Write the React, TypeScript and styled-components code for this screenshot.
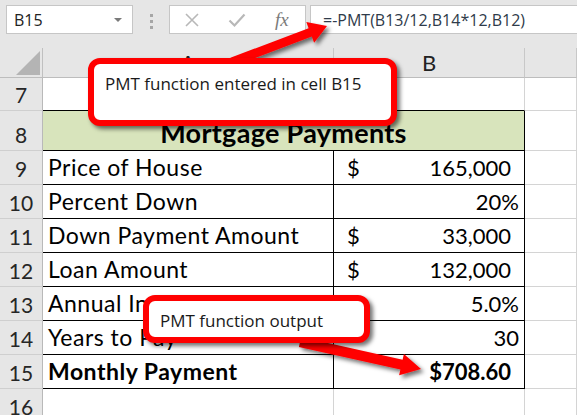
import React from 'react';
import styled, { createGlobalStyle } from 'styled-components';

const GlobalStyle = createGlobalStyle`
  html, body {
    margin: 0;
    padding: 0;
    background: #fff;
    overflow: hidden;
  }
  * {
    box-sizing: border-box;
  }
`;

const Page = styled.div`
  position: relative;
  width: 577px;
  height: 415px;
  overflow: hidden;
  background: #fff;
  font-family: Lato, 'Liberation Sans', sans-serif;
`;

const Toolbar = styled.div`
  display: flex;
  align-items: flex-start;
  height: 48px;
  padding: 5px 0 0 6px;
  background: #e6e6e6;
  font-family: 'Open Sans', 'Noto Sans', sans-serif;
`;

const NameBox = styled.div`
  display: flex;
  align-items: center;
  justify-content: space-between;
  width: 127px;
  height: 29px;
  padding: 0 10px 0 7px;
  background: #fff;
  border: 1px solid #c6c6c6;
  font-size: 16px;
  color: #222;
`;

const Caret = styled.span`
  width: 0;
  height: 0;
  border-left: 4px solid transparent;
  border-right: 4px solid transparent;
  border-top: 4px solid #7a7a7a;
`;

const Grip = styled.div`
  display: flex;
  flex-direction: column;
  gap: 3px;
  margin: 9px 0 0 17px;
`;

const GripDot = styled.span`
  width: 3px;
  height: 3px;
  background: #a6a6a6;
`;

const ButtonBox = styled.div`
  display: flex;
  align-items: center;
  width: 137px;
  height: 29px;
  margin-left: 16px;
  padding-left: 14px;
  gap: 28px;
  background: #fff;
  border: 1px solid #c6c6c6;
`;

const FxLabel = styled.span`
  font-family: 'Liberation Serif', 'DejaVu Serif', serif;
  font-style: italic;
  font-size: 19px;
  color: #7b7b7b;
  margin-left: 1px;
`;

const FormulaBox = styled.div`
  flex: 1;
  display: flex;
  align-items: center;
  height: 29px;
  margin-left: 4px;
  padding-left: 12px;
  background: #fff;
  border: 1px solid #c6c6c6;
  border-right: none;
  font-size: 16px;
  color: #2f3b4a;
`;

const Sheet = styled.div`
  display: grid;
  grid-template-columns: 43px 291px 191px 1fr;
  grid-template-rows: 30px 33px 40px repeat(8, 34px);
`;

const Corner = styled.div`
  position: relative;
  background: #e6e6e6;
  border-right: 1px solid #c0c0c0;
  border-bottom: 1px solid #bdbdbd;

  &::after {
    content: '';
    position: absolute;
    right: 2px;
    bottom: 2px;
    border-left: 24px solid transparent;
    border-bottom: 24px solid #b4b4b4;
  }
`;

const ColHead = styled.div`
  display: flex;
  align-items: center;
  justify-content: center;
  background: #e6e6e6;
  border-right: 1px solid #c8c8c8;
  border-bottom: 1px solid #bdbdbd;
  font-size: 22px;
  color: #222;
`;

const RowHead = styled.div`
  display: flex;
  align-items: flex-end;
  justify-content: center;
  padding-bottom: 5px;
  background: #e6e6e6;
  border-right: 1px solid #b9b9b9;
  border-bottom: 1px solid #cfcfcf;
  font-size: 21px;
  color: #262626;
  line-height: 1;
`;

const Cell = styled.div<{ $boxed?: boolean; $closeBottom?: boolean; $bold?: boolean }>`
  display: flex;
  align-items: flex-end;
  justify-content: space-between;
  padding: 0 5px 5px 5px;
  line-height: 1;
  font-size: 22px;
  font-weight: ${p => (p.$bold ? 700 : 400)};
  color: #000;
  white-space: nowrap;
  border-right: 1px solid ${p => (p.$boxed ? '#000' : '#d4d4d4')};
  border-bottom: 1px solid ${p => (p.$boxed || p.$closeBottom ? '#000' : '#d4d4d4')};
`;

const Label = styled.span`
  font-size: 23px;
  letter-spacing: 0.5px;
`;

const TitleCell = styled.div`
  grid-column: span 2;
  display: flex;
  align-items: flex-end;
  justify-content: center;
  padding-bottom: 4px;
  background: #d8e4bc;
  border-right: 1px solid #000;
  border-bottom: 1px solid #000;
  font-size: 27px;
  font-weight: 700;
  letter-spacing: 0.3px;
  line-height: 1;
  color: #000;
`;

const Dollar = styled.span`
  padding-left: 8px;
`;

const Amount = styled.span<{ $pad: number }>`
  margin-left: auto;
  padding-right: ${p => p.$pad}px;
`;

const Callout = styled.div<{ $x: number; $y: number; $w: number; $h: number }>`
  position: absolute;
  left: ${p => p.$x}px;
  top: ${p => p.$y}px;
  width: ${p => p.$w}px;
  height: ${p => p.$h}px;
  padding: 8px 0 0 11px;
  background: #fff;
  border: 6px solid #ff0000;
  border-radius: 12px;
  box-shadow: 3px 3px 4px rgba(0, 0, 0, 0.55);
  font-family: 'Open Sans', 'Noto Sans', sans-serif;
  font-size: 17px;
  color: #1a1a1a;
  white-space: nowrap;
`;

const ArrowLayer = styled.svg`
  position: absolute;
  left: 0;
  top: 0;
  width: 577px;
  height: 415px;
  pointer-events: none;
`;

type Row = {
  n: number;
  label: string;
  dollar?: boolean;
  value: string;
  pad: number;
  bold?: boolean;
};

const rows: Row[] = [
  { n: 9, label: 'Price of House', dollar: true, value: '165,000', pad: 8 },
  { n: 10, label: 'Percent Down', value: '20%', pad: 0 },
  { n: 11, label: 'Down Payment Amount', dollar: true, value: '33,000', pad: 8 },
  { n: 12, label: 'Loan Amount', dollar: true, value: '132,000', pad: 8 },
  { n: 13, label: 'Annual Interest Rate', value: '5.0%', pad: 0 },
  { n: 14, label: 'Years to Pay', value: '30', pad: 0 },
  { n: 15, label: 'Monthly Payment', value: '$708.60', pad: 8, bold: true },
];

const App: React.FC = () => {
  return (
    <Page>
      <GlobalStyle />
      <Toolbar>
        <NameBox>
          B15
          <Caret />
        </NameBox>
        <Grip>
          <GripDot />
          <GripDot />
          <GripDot />
        </Grip>
        <ButtonBox>
          <svg width="16" height="16" viewBox="0 0 16 16">
            <path d="M2 2 L14 14 M14 2 L2 14" stroke="#b8b8b8" strokeWidth="1.6" fill="none" />
          </svg>
          <svg width="18" height="16" viewBox="0 0 18 16">
            <path d="M1.5 8.5 L6.5 13.5 L16.5 2.5" stroke="#b8b8b8" strokeWidth="2.2" fill="none" />
          </svg>
          <FxLabel>fx</FxLabel>
        </ButtonBox>
        <FormulaBox>=-PMT(B13/12,B14*12,B12)</FormulaBox>
      </Toolbar>

      <Sheet>
        <Corner />
        <ColHead>A</ColHead>
        <ColHead>B</ColHead>
        <ColHead />

        <RowHead>7</RowHead>
        <Cell $closeBottom />
        <Cell $closeBottom />
        <Cell />

        <RowHead>8</RowHead>
        <TitleCell>Mortgage Payments</TitleCell>
        <Cell />

        {rows.map(r => (
          <React.Fragment key={r.n}>
            <RowHead>{r.n}</RowHead>
            <Cell $boxed $bold={r.bold}>
              <Label>{r.label}</Label>
            </Cell>
            <Cell $boxed $bold={r.bold}>
              {r.dollar && <Dollar>$</Dollar>}
              <Amount $pad={r.pad}>{r.value}</Amount>
            </Cell>
            <Cell />
          </React.Fragment>
        ))}

        <RowHead>16</RowHead>
        <Cell />
        <Cell />
        <Cell />
      </Sheet>

      <ArrowLayer viewBox="0 0 577 415">
        <defs>
          <filter id="arrowShadow" x="-20%" y="-40%" width="150%" height="200%">
            <feDropShadow dx="3" dy="3" stdDeviation="2" floodColor="#000" floodOpacity="0.55" />
          </filter>
        </defs>
        <polygon
          points="230.4,57.8 308.6,28.2 306.3,22.1 327,26 314.1,42.7 311.8,36.6 233.6,66.2"
          fill="#ff0000"
          filter="url(#arrowShadow)"
        />
        <polygon
          points="301.1,337.1 402.6,359.7 403.9,353.9 421,369 399.1,375.3 400.4,369.5 298.9,346.9"
          fill="#ff0000"
          filter="url(#arrowShadow)"
        />
      </ArrowLayer>

      <Callout $x={88} $y={58} $w={309} $h={68}>
        PMT function entered in cell B15
      </Callout>
      <Callout $x={143} $y={295} $w={227} $h={48}>
        PMT function output
      </Callout>
    </Page>
  );
};

export default App;
